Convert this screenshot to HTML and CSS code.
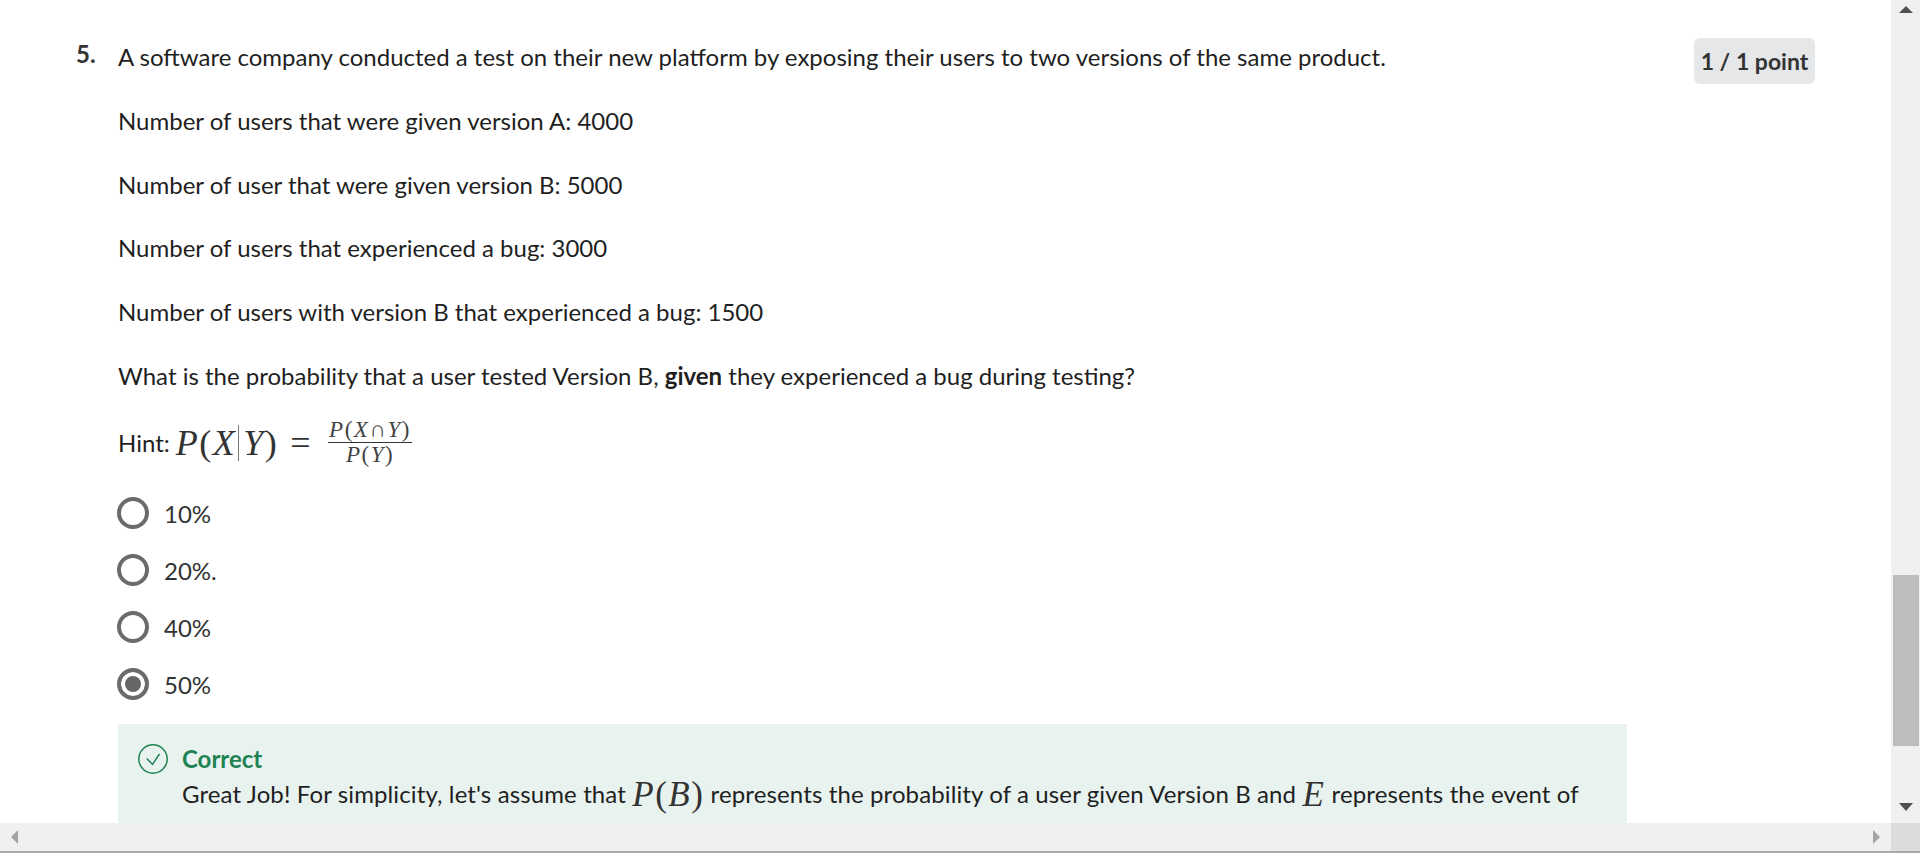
FILE: index.html
```html
<!DOCTYPE html>
<html lang="en">
<head>
  <meta charset="UTF-8" />
  <title>Quiz</title>
  <link rel="stylesheet" href="styles.css">
</head>
<body>
  <div class="top">
    <main class="page">
      <div class="question">
        <div class="number">5.</div>
        <div class="body">
          <p>A software company conducted a test on their new platform by exposing their users to two versions of the same product.</p>
          <p>Number of users that were given version A: 4000</p>
          <p>Number of user that were given version B: 5000</p>
          <p>Number of users that experienced a bug: 3000</p>
          <p>Number of users with version B that experienced a bug: 1500</p>
          <p>What is the probability that a user tested Version B, <b>given</b> they experienced a bug during testing?</p>
          <div class="hint">
            <span>Hint:</span>
            <span class="math"><i>P</i>(<i>X</i><span class="bar"></span><i>Y</i>)<span class="equals">=</span></span>
            <span class="frac">
              <span class="frac-top"><i>P</i>(<i>X</i>∩<i>Y</i>)</span>
              <span class="frac-bottom"><i>P</i>(<i>Y</i>)</span>
            </span>
          </div>
          <div class="options">
            <div class="option"><span class="radio"></span>10%</div>
            <div class="option"><span class="radio"></span>20%.</div>
            <div class="option"><span class="radio"></span>40%</div>
            <div class="option"><span class="radio checked"></span>50%</div>
          </div>
          <div class="feedback">
            <svg class="check" width="30" height="30" viewBox="0 0 30 30" fill="none" stroke="#1f8354" stroke-width="1.5">
              <circle cx="15" cy="15" r="14.2" />
              <path d="M8.7 14.5l5.8 5.8 7-10.3" />
            </svg>
            <div class="feedback-text">
              <div class="correct">Correct</div>
              <div class="explain">Great Job! For simplicity, let's assume that <span class="math small"><i>P</i>(<i>B</i>)</span> represents the probability of a user given Version B and <span class="math small"><i>E</i></span> represents the event of</div>
            </div>
          </div>
        </div>
        <div class="score"><span class="badge">1 / 1 point</span></div>
      </div>
    </main>
    <div class="vscroll">
      <div class="arrow-up"></div>
      <div class="track"><div class="thumb"></div></div>
      <div class="arrow-down"></div>
    </div>
  </div>
  <div class="hscroll">
    <div class="hbar">
      <div class="arrow-left"></div>
      <div class="arrow-right"></div>
    </div>
    <div class="corner"></div>
  </div>
</body>
</html>
```
FILE: styles.css
```css
* {
  box-sizing: border-box;
}

html, body {
  height: 100%;
}

body {
  margin: 0;
  display: flex;
  flex-direction: column;
  overflow: hidden;
  background: #fff;
  color: #1f1f1f;
  font-family: 'Lato', sans-serif;
  font-size: 24px;
}

.top {
  display: flex;
  flex: 1;
  min-height: 0;
}

.page {
  flex: 1;
  min-width: 0;
  overflow: hidden;
  padding-top: 45px;
}

.question {
  display: flex;
  padding-left: 76px;
}

.number {
  width: 42px;
  font-weight: 700;
  line-height: 28px;
  margin-top: -5px;
  color: #333;
}

.body {
  width: 1509px;
  flex: none;
}

p {
  margin: 0 0 39.75px;
  line-height: 24px;
}

.hint {
  display: flex;
  align-items: center;
  gap: 6px;
  height: 52px;
  margin-top: -11px;
}

.math {
  font-family: 'Liberation Serif', serif;
  font-size: 36px;
  letter-spacing: 1.5px;
  display: inline-flex;
  align-items: center;
  line-height: 1;
  color: #333;
}

.bar {
  width: 1px;
  height: 36px;
  margin: 0 4px 0 2px;
  background: #777;
}

.equals {
  margin: 0 10px 0 12px;
}

.frac {
  display: inline-flex;
  flex-direction: column;
  align-items: center;
  font-family: 'Liberation Serif', serif;
  font-size: 23px;
  letter-spacing: 1.5px;
  line-height: 24px;
  color: #444;
}

.frac-top {
  border-bottom: 1px solid #333;
  padding: 0 1px;
}

.options {
  margin-top: 16px;
}

.option {
  display: flex;
  align-items: center;
  gap: 15px;
  height: 57px;
  color: #333;
}

.radio {
  width: 32px;
  height: 32px;
  margin-left: -1px;
  border: 4px solid #6b6b6b;
  border-radius: 50%;
  background: #fff;
}

.radio.checked {
  background: #666;
  box-shadow: inset 0 0 0 4px #fff;
}

.feedback {
  display: flex;
  gap: 14px;
  margin-top: 11px;
  padding: 20px 20px 30px;
  background: #e8f2ef;
}

.check {
  flex: none;
}

.correct {
  color: #1f8354;
  font-weight: 700;
  line-height: 30px;
}

.explain {
  line-height: 42px;
  margin-top: -1px;
  white-space: nowrap;
  letter-spacing: 0.12px;
}

.math.small {
  vertical-align: -3px;
  font-size: 35px;
}

.score {
  margin: -7px 0 0 67px;
}

.badge {
  display: block;
  width: 121px;
  height: 46px;
  line-height: 46px;
  text-align: center;
  border-radius: 6px;
  background: #e5e7e8;
  font-weight: 700;
  font-size: 23px;
  color: #333;
}

.vscroll {
  width: 29px;
  flex: none;
  display: flex;
  flex-direction: column;
  align-items: center;
  background: #f0f0f0;
}

.arrow-up, .arrow-down {
  flex: none;
  width: 0;
  height: 0;
  border-left: 7px solid transparent;
  border-right: 7px solid transparent;
}

.arrow-up {
  margin-top: 6px;
  border-bottom: 7px solid #505050;
}

.arrow-down {
  margin: 0 0 12px;
  border-top: 8px solid #505050;
}

.track {
  flex: 1;
  width: 100%;
  padding: 0 1px 0 2px;
}

.thumb {
  height: 171px;
  margin-top: 562px;
  background: #bdbdbd;
}

.hscroll {
  flex: none;
  display: flex;
  height: 30px;
  border-bottom: 2px solid #aaa;
}

.hbar {
  flex: 1;
  display: flex;
  align-items: center;
  justify-content: space-between;
  padding: 0 11px;
  background: #f0f0f0;
}

.arrow-left, .arrow-right {
  width: 0;
  height: 0;
  border-top: 7px solid transparent;
  border-bottom: 7px solid transparent;
}

.arrow-left {
  border-right: 7px solid #a3a3a3;
}

.arrow-right {
  border-left: 7px solid #a3a3a3;
}

.corner {
  width: 29px;
  background: #dcdcdc;
}
```
